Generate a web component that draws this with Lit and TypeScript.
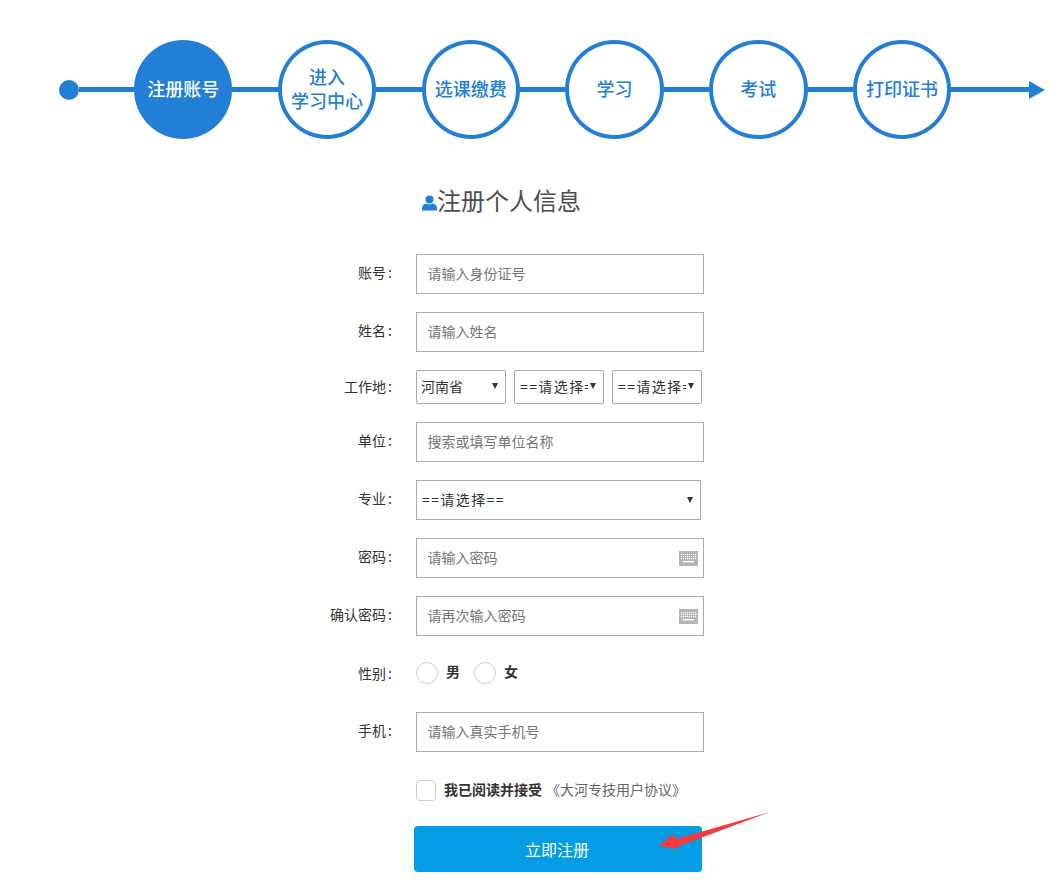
import { LitElement, html, css, svg } from "lit";
import { customElement } from "lit/decorators.js";

const FONT = css`"Microsoft YaHei", "Noto Sans CJK SC", "Noto Sans", sans-serif`;

const keyboard = html`<svg class="kbd" width="19" height="15" viewBox="0 0 19 15" aria-hidden="true">
  <rect width="19" height="15" fill="#b5b5b5"/>
  ${[3, 5, 7].map((y) =>
    [2, 4, 6, 8, 10, 12, 14, 16].map((x) => svg`<rect x="${x}" y="${y}" width="1.2" height="1.2" fill="#fff"/>`)
  )}
  <rect x="4" y="10" width="11" height="1.4" fill="#fff"/>
</svg>`;

@customElement("app-root")
export class AppRoot extends LitElement {
  static styles = css`
    :host {
      display: block;
      width: 1062px;
      height: 883px;
      position: relative;
      overflow: hidden;
      background: #fff;
      font-family: ${FONT};
      color: #333;
    }
    * { box-sizing: border-box; }

    .steps {
      display: flex;
      align-items: center;
      padding: 40px 0 0 59px;
      height: 139px;
    }
    .dot { width: 20px; height: 20px; border-radius: 50%; background: #237fd6; flex: none; }
    .line { height: 5px; background: #237fd6; width: 45.4px; flex: none; }
    .line.first { width: 55px; }
    .line.last { width: 78px; }
    .head {
      width: 0; height: 0; flex: none;
      border-left: 16px solid #237fd6;
      border-top: 9px solid transparent;
      border-bottom: 9px solid transparent;
    }
    .step {
      width: 98.4px; height: 99px; flex: none;
      border-radius: 50%;
      border: 4px solid #237fd6;
      display: flex; align-items: center; justify-content: center;
      text-align: center;
      color: #237fd6;
      font-size: 18px;
      line-height: 24px;
      font-weight: 500;
      background: #fff;
      padding: 0 0 3px 0;
    }
    .step.on { background: #237fd6; color: #fff; }

    h1 {
      margin: 0;
      padding: 44px 0 0 422px;
      height: 115px;
      display: flex;
      align-items: flex-start;
      font-size: 24px;
      line-height: 34px;
      font-weight: 400;
      color: #4d4d4d;
    }
    h1 svg { margin-top: 12px; flex: none; }

    .row {
      display: flex;
      align-items: flex-start;
      margin-bottom: 18px;
    }
    label.name {
      width: 392px;
      height: 34px;
      flex: none;
      text-align: right;
      font-size: 14px;
      line-height: 37px;
      color: #333;
    }
    .colon { margin-left: 2px; }
    .compact label.name { line-height: 33px; }
    .ctl { margin-left: 24px; position: relative; display: flex; }
    input.text {
      width: 288px;
      height: 40px;
      border: 1px solid #aaa;
      padding: 0 10px 3px 10.5px;
      font: 14px ${FONT};
      color: #333;
      background: #fff;
      outline: none;
      border-radius: 0;
    }
    input.text::placeholder { color: #757575; opacity: 1; }
    .kbd { position: absolute; right: 6px; top: 13px; }

    .pick { position: relative; display: block; }
    .pick::after {
      content: "";
      position: absolute;
      right: 8px;
      top: 50%;
      margin-top: -4px;
      width: 0; height: 0;
      border-top: 6px solid #333;
      border-left: 3px solid transparent;
      border-right: 3px solid transparent;
      pointer-events: none;
    }
    select {
      appearance: none;
      -webkit-appearance: none;
      display: block;
      font: 14px ${FONT};
      color: #333;
      background: #fff;
      border: 1px solid #aaa;
      border-radius: 2px;
      height: 34px;
      width: 90px;
      padding: 0 15px 2px 4px;
    }
    select.spaced { letter-spacing: 1.4px; padding-left: 5px; }
    select.wide { width: 285px; height: 40px; border-radius: 0; }
    .wide-pick::after { margin-top: -3px; }
    .selects { gap: 8px; }

    .radio-row { height: 22px; margin-bottom: 28px; margin-top: 26px; align-items: center; }
    .radio-row label.name { line-height: 22px; height: 22px; padding-bottom: 3px; }
    .radio { display: flex; align-items: center; }
    .circle {
      width: 22px; height: 22px; border-radius: 50%;
      border: 1px solid #ccc; background: #fff; flex: none;
    }
    .opt { display: flex; align-items: center; gap: 8px; font-size: 14px; font-weight: 700; color: #333; margin-right: 14px; line-height: 18px; }
    .opt b { font-weight: 700; padding-bottom: 5px; }

    .agree { margin: 28px 0 0 416px; display: flex; align-items: flex-start; height: 21px; font-size: 14px; line-height: 18px; }
    .box { width: 20px; height: 21px; border: 1px solid #ccc; border-radius: 4px; flex: none; margin-right: 8px; }
    .agree b { font-weight: 700; color: #333; margin-right: 4px; }
    .agree a { color: #666; text-decoration: none; }

    button {
      display: block;
      margin: 25px 0 0 414px;
      width: 288px;
      height: 46px;
      border: 0;
      border-radius: 4px;
      background: #039ce5;
      color: #fff;
      font: 16px ${FONT};
      padding: 0 2px 0 0;
      text-align: center;
    }
    .arrow { position: absolute; left: 650px; top: 805px; }
  `;

  render() {
    const lab = (name: string) => html`<label class="name">${name}<span class="colon">:</span></label>`;
    const field = (name: string, ph: string, kbd = false) => html`
      <div class="row">
        ${lab(name)}
        <div class="ctl">
          <input class="text" placeholder=${ph} />
          ${kbd ? keyboard : ""}
        </div>
      </div>`;
    return html`
      <div class="steps">
        <span class="dot"></span><span class="line first"></span>
        <div class="step on">注册账号</div><span class="line"></span>
        <div class="step">进入<br />学习中心</div><span class="line"></span>
        <div class="step">选课缴费</div><span class="line"></span>
        <div class="step">学习</div><span class="line"></span>
        <div class="step">考试</div><span class="line"></span>
        <div class="step">打印证书</div><span class="line last"></span><span class="head"></span>
      </div>
      <h1>
        <svg width="15" height="16" viewBox="0 0 15 16" aria-hidden="true">
          <circle cx="7.5" cy="4.4" r="4" fill="#237fd6"/>
          <path d="M0 15.5V13C0 10.2 2.4 8.6 4.6 8.4C6.4 9.6 8.6 9.6 10.4 8.4C12.6 8.6 15 10.2 15 13V15.5Z" fill="#237fd6"/>
        </svg>注册个人信息
      </h1>
      ${field("账号", "请输入身份证号")}
      ${field("姓名", "请输入姓名")}
      <div class="row compact">
        ${lab("工作地")}
        <div class="ctl selects">
          <span class="pick"><select><option>河南省</option></select></span>
          <span class="pick"><select class="spaced"><option>==请选择==</option></select></span>
          <span class="pick"><select class="spaced"><option>==请选择==</option></select></span>
        </div>
      </div>
      ${field("单位", "搜索或填写单位名称")}
      <div class="row">
        ${lab("专业")}
        <div class="ctl"><span class="pick wide-pick"><select class="wide spaced"><option>==请选择==</option></select></span></div>
      </div>
      ${field("密码", "请输入密码", true)}
      ${field("确认密码", "请再次输入密码", true)}
      <div class="row radio-row">
        ${lab("性别")}
        <div class="ctl radio">
          <span class="opt"><span class="circle"></span><b>男</b></span>
          <span class="opt"><span class="circle"></span><b>女</b></span>
        </div>
      </div>
      ${field("手机", "请输入真实手机号")}
      <div class="agree"><span class="box"></span><b>我已阅读并接受</b><a>《大河专技用户协议》</a></div>
      <button>立即注册</button>
      <svg class="arrow" width="125" height="50" viewBox="0 0 125 50" aria-hidden="true">
        <polygon points="120,7 29,41 27,44 9,41 23,29 26,34" fill="#f53a3f"/>
      </svg>
    `;
  }
}
